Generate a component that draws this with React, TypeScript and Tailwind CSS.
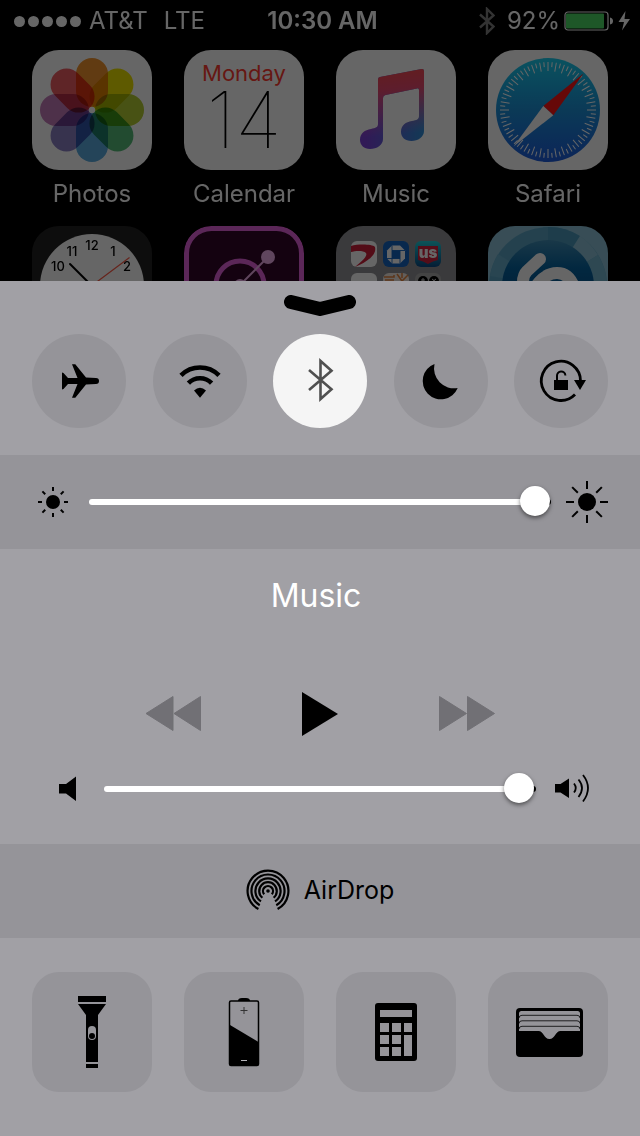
import React, { useState } from 'react';

const petals = ['#f2952e', '#ece000', '#b4cc32', '#55bc78', '#5aaade', '#8a80c4', '#c47cb8', '#ee5c62'];

const PhotosIcon = () => (
    <svg viewBox="0 0 120 120" className="w-full h-full bg-white">
        {petals.map((color, i) => (
            <rect
                key={color}
                x="44"
                y="8"
                width="32"
                height="49"
                rx="16"
                fill={color}
                transform={`rotate(${i * 45} 60 60)`}
                className="mix-blend-multiply"
            />
        ))}
        <circle cx="60" cy="60" r="3" fill="#fff" />
    </svg>
);

const CalendarIcon = () => (
    <div className="flex flex-col items-center w-full h-full pt-2 bg-white">
        <span className="text-[22px] leading-[30px] text-[#ff3b30]">Monday</span>
        <span className="text-[78px] leading-[64px] font-thin text-black">14</span>
    </div>
);

const MusicIcon = () => {
    const note =
        'M44 27L85.500 19Q88 18.600 88 21V81C88 87 82 91 75.500 91C69 91 65 87 65 82C65 75 70 72 76 71C81 70 83 69.500 83 66V40Q83 38 81 38.400L49.500 45Q47 45.500 47 48V89C47 95 41 99 34 99C28 99 24 95 24 90C24 83 29 80 35 79C40 78 42 77 42 74V29.500Q42 27.400 44 27Z';
    return (
        <svg viewBox="0 0 120 120" className="w-full h-full bg-white">
            <defs>
                <linearGradient id="note-base" gradientUnits="userSpaceOnUse" x1="30" y1="0" x2="88" y2="0">
                    <stop offset="0" stopColor="#7a42d8" />
                    <stop offset="1" stopColor="#2f8fd8" />
                </linearGradient>
                <linearGradient id="note-top" gradientUnits="userSpaceOnUse" x1="50" y1="25" x2="56" y2="85">
                    <stop offset="0" stopColor="#f44a58" />
                    <stop offset="0.250" stopColor="#e84a70" />
                    <stop offset="1" stopColor="#e84a90" stopOpacity="0" />
                </linearGradient>
            </defs>
            <path d={note} fill="url(#note-base)" />
            <path d={note} fill="url(#note-top)" />
        </svg>
    );
};

const SafariIcon = () => (
    <svg viewBox="0 0 120 120" className="w-full h-full bg-white">
        <defs>
            <linearGradient id="safari" x1="0" y1="0" x2="0" y2="1">
                <stop offset="0" stopColor="#19cdee" />
                <stop offset="0.500" stopColor="#1c90d8" />
                <stop offset="1" stopColor="#1e5cdc" />
            </linearGradient>
        </defs>
        <circle cx="60" cy="60" r="52" fill="url(#safari)" />
        {Array.from({ length: 72 }, (_, i) => (
            <line
                key={i}
                x1="60"
                x2="60"
                y1="12"
                y2={i % 2 ? 17 : 21}
                stroke="#fff"
                strokeWidth="1"
                transform={`rotate(${i * 5} 60 60)`}
            />
        ))}
        <path d="M95.500 23.500L55.300 56L65.300 65.300Z" fill="#ff1414" />
        <path d="M25.500 96.500L55.300 56L65.300 65.300Z" fill="#fff" />
    </svg>
);

const clockNumbers = [
    { n: '12', x: 60, y: 24 },
    { n: '11', x: 40, y: 30 },
    { n: '1', x: 81, y: 30 },
    { n: '10', x: 26, y: 45 },
    { n: '2', x: 95, y: 45 },
];

const ClockIcon = () => (
    <svg viewBox="0 0 120 120" className="w-full h-full bg-[#222]">
        <circle cx="60" cy="60" r="52" fill="#fff" />
        {clockNumbers.map(({ n, x, y }) => (
            <text key={n} x={x} y={y} textAnchor="middle" fontSize="13" fontWeight="500" fill="#000">
                {n}
            </text>
        ))}
        <path d="M38 38L60 60" stroke="#000" strokeWidth="2" strokeLinecap="round" />
        <path d="M97.500 31.500L58 61" stroke="#ff5a46" strokeWidth="1.200" />
    </svg>
);

const OrbitIcon = () => (
    <svg viewBox="0 0 120 120" className="w-full h-full bg-[#330628]">
        <rect x="2.500" y="2.500" width="115" height="115" rx="25" fill="none" stroke="#e462dc" strokeWidth="5" />
        <circle cx="56" cy="59" r="24" fill="none" stroke="#e462dc" strokeWidth="5" />
        <path d="M56 59L84 31" stroke="#efb0ea" strokeWidth="2" />
        <circle cx="84" cy="31" r="7" fill="#efb0ea" />
        <circle cx="56" cy="59" r="6" fill="#efb0ea" />
    </svg>
);

const FolderIcon = () => (
    <svg viewBox="0 0 120 120" className="w-full h-full bg-[#919196]">
        <defs>
            <linearGradient id="teal" x1="0" y1="0" x2="0" y2="1">
                <stop offset="0" stopColor="#1fd0dc" />
                <stop offset="1" stopColor="#0a4a86" />
            </linearGradient>
        </defs>
        <rect x="15" y="15" width="26" height="26" rx="6" fill="#fff" />
        <path d="M15 20C22 18 36 18 39 21C41 29 31 36 19 41C26 35 32 30 30 27C27 24 19 25 15 26Z" fill="#d0203a" />
        <rect x="47" y="15" width="26" height="26" rx="6" fill="#1464c0" />
        <path d="M56 19.500H64L69 24.500V32.500L64 37.500H56L51 32.500V24.500Z" fill="#fff" />
        <rect x="56" y="24.500" width="8" height="8" fill="#1464c0" />
        <path d="M56 19.500V24.500H69M64 37.500V24.500M51 32.500H64M56 24.500V37.500" fill="none" stroke="#1464c0" strokeWidth="0.900" />
        <rect x="79" y="15" width="26" height="26" rx="6" fill="url(#teal)" />
        <path d="M82 20H102V34Q97 35 92 38Q87 35 82 34Z" fill="#d4213c" />
        <text x="92" y="32" textAnchor="middle" fontSize="15" fontWeight="900" fill="#fff">
            us
        </text>
        <rect x="15" y="47" width="26" height="26" rx="6" fill="#fff" />
        <rect x="47" y="47" width="26" height="26" rx="6" fill="#f4ece4" />
        <path d="M48 51H58V49M49 54H58M61 48L66 55L72 49M66 47V52" fill="none" stroke="#e8843c" strokeWidth="1.500" />
        <rect x="79" y="47" width="26" height="26" rx="6" fill="#aaa" />
        <circle cx="87" cy="55" r="5" fill="#000" />
        <circle cx="98" cy="55" r="5" fill="#000" />
        <path d="M85 54H89M87 52V56M96 53L100 56M100 53L96 56" stroke="#ccc" />
    </svg>
);

const ShazamIcon = () => (
    <svg viewBox="0 0 120 120" className="w-full h-full bg-[#8cc0d6]">
        <defs>
            <linearGradient id="disc" x1="0" y1="0" x2="0" y2="1">
                <stop offset="0" stopColor="#3f8cb4" />
                <stop offset="0.300" stopColor="#0664a0" />
                <stop offset="1" stopColor="#043c78" />
            </linearGradient>
        </defs>
        <circle cx="60" cy="60" r="59" fill="#5aa4c4" />
        <path d="M60 60V1A59 59 0 0 1 92 10Z" fill="#4c9abc" />
        <path d="M60 60L92 10A59 59 0 0 1 110 29Z" fill="#8cc0d6" />
        <path d="M60 60L110 29A59 59 0 0 1 119 60Z" fill="#74b4ce" />
        <path d="M60 60L2 50A59 59 0 0 1 10 28Z" fill="#66acca" />
        <circle cx="60" cy="60" r="46" fill="url(#disc)" />
        <path d="M52 33L39 45Q33 51 36 64M44 66Q55 47 69 47Q81 47 86 61" fill="none" stroke="#fff" strokeWidth="12" strokeLinecap="round" />
    </svg>
);

const apps = [
    { name: 'Photos', Icon: PhotosIcon },
    { name: 'Calendar', Icon: CalendarIcon },
    { name: 'Music', Icon: MusicIcon },
    { name: 'Safari', Icon: SafariIcon },
    { name: '', Icon: ClockIcon },
    { name: '', Icon: OrbitIcon },
    { name: '', Icon: FolderIcon },
    { name: '', Icon: ShazamIcon },
];

const StatusBar = () => (
    <div className="grid grid-cols-[1fr_auto_1fr] items-center h-[42px] pl-[14px] pr-[9px] text-2xl">
        <div className="flex items-center">
            <div className="flex gap-[3px] mr-2">
                {[1, 2, 3, 4, 5].map(dot => (
                    <span key={dot} className="w-[11px] h-[11px] rounded-full bg-white" />
                ))}
            </div>
            <span className="mr-4">AT&amp;T</span>
            <span>LTE</span>
        </div>
        <span className="font-semibold">10:30 AM</span>
        <div className="flex items-center justify-end">
            <svg viewBox="0 0 16 28" className="w-4 h-7 mr-3">
                <path d="M1 7.500L14.500 19.500L8 26V2L14.500 8.500L1 20.500" fill="none" stroke="#808080" strokeWidth="2.400" />
            </svg>
            <span className="mr-1">92%</span>
            <svg viewBox="0 0 67 20" className="w-[67px] h-5">
                <rect x="1" y="1" width="43" height="18" rx="3" fill="none" stroke="#fff" strokeWidth="1.200" />
                <rect x="2" y="2.500" width="38" height="15" rx="1" fill="#4cd964" />
                <path d="M46 6.500Q49 7 49 10Q49 13 46 13.500Z" fill="#fff" />
                <path d="M61.500 0L54.500 11H60L58 19.500L66 8H60.500Z" fill="#fff" />
            </svg>
        </div>
    </div>
);

const HomeScreen = () => (
    <div className="h-[281px] overflow-hidden bg-black">
        <div className="text-white opacity-40">
            <StatusBar />
            <div className="grid grid-cols-4 gap-x-8 gap-y-2 px-8 pt-2">
                {apps.map(({ name, Icon }, i) => (
                    <div key={i} className="flex flex-col items-center">
                        <div className="w-[120px] h-[120px] overflow-hidden rounded-[27px]">
                            <Icon />
                        </div>
                        <span className="text-2xl leading-[48px]">{name}</span>
                    </div>
                ))}
            </div>
        </div>
    </div>
);

const toggles = [
    {
        name: 'Airplane Mode',
        icon: (
            <path d="M30 38.500L31.500 39L36 44H45.500L40 30.300H43.300L54 43.500L64 44a3 3 0 0 1 0 6L54 50.500L43.300 63.700H40L45.500 50H36L31.500 55L30 55.500Z" />
        ),
    },
    {
        name: 'Wi-Fi',
        icon: (
            <>
                <path
                    d="M28 41.300A27 27 0 0 1 66 41.300M35.400 49.200A16.200 16.200 0 0 1 58.600 49.200"
                    fill="none"
                    stroke="#000"
                    strokeWidth="4.600"
                />
                <path d="M41 56.500Q47 51 53 56.500L47 63.800Z" />
            </>
        ),
    },
    {
        name: 'Bluetooth',
        icon: (
            <path d="M36 36L58.500 55.300L47.500 65V27L58.500 36.700L36 56" fill="none" stroke="#505050" strokeWidth="2.600" />
        ),
    },
    {
        name: 'Do Not Disturb',
        icon: <path d="M40.500 30A18.200 18.200 0 1 0 63.700 54A20 20 0 0 1 40.500 30Z" />,
    },
    {
        name: 'Rotation Lock',
        icon: (
            <>
                <path d="M66.500 47A19.600 19.600 0 1 0 61 60.500" fill="none" stroke="#000" strokeWidth="2.800" />
                <path d="M60 46H72L66 56Z" />
                <rect x="40" y="46" width="14" height="10" />
                <path d="M43 46V42A4.200 4.200 0 0 1 51.400 41.500" fill="none" stroke="#000" strokeWidth="2" />
            </>
        ),
    },
];

const ToggleRow = () => {
    const [active, setActive] = useState<string[]>(['Bluetooth']);

    const toggle = (name: string) => {
        setActive(prev => (prev.includes(name) ? prev.filter(n => n !== name) : [...prev, name]));
    };

    return (
        <div className="flex justify-between px-8">
            {toggles.map(({ name, icon }) => (
                <button
                    key={name}
                    aria-label={name}
                    aria-pressed={active.includes(name)}
                    onClick={() => toggle(name)}
                    className={`w-[94px] h-[94px] rounded-full ${active.includes(name) ? 'bg-[#f5f5f5]' : 'bg-[#959499]'}`}
                >
                    <svg viewBox="0 0 94 94" className="w-full h-full">
                        {icon}
                    </svg>
                </button>
            ))}
        </div>
    );
};

const Slider = ({ label, initial }: { label: string; initial: number }) => {
    const [value, setValue] = useState(initial);

    return (
        <input
            type="range"
            aria-label={label}
            min={0}
            max={1000}
            value={value}
            onChange={e => setValue(Number(e.target.value))}
            style={{ '--fill': `${value / 10 - 2}%` } as React.CSSProperties}
            className="flex-1 min-w-0 h-8 appearance-none bg-transparent [&::-webkit-slider-runnable-track]:h-[6px] [&::-webkit-slider-runnable-track]:rounded-full [&::-webkit-slider-runnable-track]:bg-[linear-gradient(to_right,#fff_var(--fill),#000_var(--fill))] [&::-webkit-slider-thumb]:appearance-none [&::-webkit-slider-thumb]:w-[30px] [&::-webkit-slider-thumb]:h-[30px] [&::-webkit-slider-thumb]:-mt-[13px] [&::-webkit-slider-thumb]:rounded-full [&::-webkit-slider-thumb]:bg-white [&::-webkit-slider-thumb]:shadow-[0_2px_4px_rgba(0,0,0,0.5)]"
        />
    );
};

const SunIcon = ({ core, from, to, className }: { core: number; from: number; to: number; className: string }) => (
    <svg viewBox="-21 -21 42 42" className={className}>
        <circle r={core} />
        {[0, 45, 90, 135, 180, 225, 270, 315].map(angle => (
            <line key={angle} y1={from} y2={to} stroke="#000" strokeWidth="2" transform={`rotate(${angle})`} />
        ))}
    </svg>
);

const Transport = () => (
    <div className="flex items-center justify-center gap-[101px]">
        <button aria-label="Previous" className="text-[#717075]">
            <svg viewBox="0 0 56 36" className="w-14 h-9" fill="currentColor" stroke="currentColor" strokeLinejoin="round">
                <path d="M1 17.500L28 0.500V34.500ZM29 17.500L55.500 0.500V34.500Z" />
            </svg>
        </button>
        <button aria-label="Play">
            <svg viewBox="0 0 36 44" className="w-9 h-11">
                <path d="M0 0L36 22L0 44Z" />
            </svg>
        </button>
        <button aria-label="Next" className="text-[#717075]">
            <svg viewBox="0 0 56 36" className="w-14 h-9" fill="currentColor" stroke="currentColor" strokeLinejoin="round">
                <path d="M55.500 17.500L28.500 0.500V34.500ZM27.500 17.500L0.500 0.500V34.500Z" />
            </svg>
        </button>
    </div>
);

// r = ring radius, a = half of the opening at the bottom, in degrees
const rings = [
    { r: 20.4, a: 28 },
    { r: 16.5, a: 30 },
    { r: 12.6, a: 34 },
    { r: 8.8, a: 40 },
    { r: 5, a: 50 },
];

const AirDropIcon = () => (
    <svg viewBox="-22 -22 44 44" className="w-11 h-11">
        {rings.map(({ r, a }) => {
            const x = r * Math.sin((a * Math.PI) / 180);
            const y = r * Math.cos((a * Math.PI) / 180);
            return (
                <path key={r} d={`M${-x} ${y}A${r} ${r} 0 1 1 ${x} ${y}`} fill="none" stroke="#000" strokeWidth="2.200" />
            );
        })}
        <circle r="1.800" />
    </svg>
);

const shortcuts = [
    {
        name: 'Flashlight',
        icon: (
            <>
                <path d="M46 24H74V30H46ZM46 32H74L66 43V90H54V43ZM54 92H66V96H54Z" />
                <rect x="56" y="54" width="8" height="14" rx="4" fill="#959499" />
                <circle cx="60" cy="64" r="3" />
            </>
        ),
    },
    {
        name: 'Low Power Mode',
        icon: (
            <>
                <path d="M54 29Q54 26 58 26H62Q66 26 66 29Z" />
                <rect x="45.500" y="29" width="29" height="64.500" rx="1.500" fill="none" stroke="#000" strokeWidth="1.500" />
                <path d="M46 53L74 69.700V93H46Z" />
                <path d="M56.500 38.500H63.500M60 35V42" stroke="#333" />
                <path d="M57 88.500H63" stroke="#b5b4b9" />
            </>
        ),
    },
    {
        name: 'Calculator',
        icon: (
            <>
                <rect x="39" y="31" width="42" height="58" rx="3" />
                <path
                    d="M44 38H76V45H44ZM44 51H53V60H44ZM56 51H65V60H56ZM68 51H76V60H68ZM44 63H53V72H44ZM56 63H65V72H56ZM68 63H76V84H68ZM44 75H53V84H44ZM56 75H65V84H56Z"
                    fill="#959499"
                />
            </>
        ),
    },
    {
        name: 'Wallet',
        icon: (
            <>
                <rect x="28" y="36" width="67" height="49" rx="4" />
                <path
                    d="M31 59V41.500Q31 39 33.500 39H89.500Q92 39 92 41.500V59H72.500C67.500 59 67 67 61.500 67C56 67 55.500 59 50.500 59Z"
                    fill="#959499"
                />
                <path
                    d="M31 46Q31 43.300 34 43.300H89Q92 43.300 92 46M31 51.500Q31 48.800 34 48.800H89Q92 48.800 92 51.500M31 57Q31 54.300 34 54.300H89Q92 54.300 92 57"
                    fill="none"
                    stroke="#000"
                    strokeWidth="0.800"
                />
            </>
        ),
    },
];

const App: React.FC = () => {
    return (
        <div className="min-h-screen flex flex-col bg-[#a1a0a5] font-[Inter,'Liberation_Sans',sans-serif]">
            <HomeScreen />

            {/* Toggles */}
            <div className="pt-[14px] pb-[27px]">
                <svg viewBox="0 0 72 22" className="w-[72px] h-[22px] mx-auto mb-[17px]">
                    <path d="M7 7L36 14L65 7" fill="none" stroke="#000" strokeWidth="14" strokeLinecap="round" strokeLinejoin="round" />
                </svg>
                <ToggleRow />
            </div>

            {/* Brightness */}
            <div className="flex items-center h-[94px] px-8 bg-[#959499]">
                <SunIcon core={7} from={11} to={15} className="w-[42px] h-[42px] mr-[15px]" />
                <Slider label="Brightness" initial={997} />
                <SunIcon core={9} from={13} to={21} className="w-[42px] h-[42px] ml-[15px]" />
            </div>

            {/* Now playing */}
            <div className="flex flex-col h-[295px] pt-6">
                <h1 className="pr-2 text-[32px] leading-[46px] text-center text-white">Music</h1>
                <div className="mt-[73px]">
                    <Transport />
                </div>
                <div className="flex items-center h-[34px] mt-9 pl-[59px] pr-[50px]">
                    <svg viewBox="0 0 17 26" className="w-[17px] h-[26px] mr-7">
                        <path d="M0 8H7L17 0.500V25L7 17.500H0Z" />
                    </svg>
                    <Slider label="Volume" initial={995} />
                    <svg viewBox="0 0 35 30" className="w-[35px] h-[30px] ml-[19px]" fill="none" stroke="#000" strokeWidth="1.800">
                        <path d="M0 10H5.500L14 4.500V24L5.500 18.500H0Z" fill="#000" stroke="none" />
                        <path d="M19 9.500Q22.500 14 19 18.500M23.500 5.500Q30.500 14 23.500 23M28 1Q38 14 28 27.500" />
                    </svg>
                </div>
            </div>

            {/* AirDrop */}
            <button className="flex items-center justify-center gap-[14px] h-[94px] bg-[#959499] text-[25px]">
                <AirDropIcon />
                AirDrop
            </button>

            {/* Shortcuts */}
            <div className="grid grid-cols-4 gap-x-8 px-8 pt-[34px] pb-11">
                {shortcuts.map(({ name, icon }) => (
                    <button key={name} aria-label={name} className="justify-self-center w-[120px] h-[120px] rounded-[27px] bg-[#959499]">
                        <svg viewBox="0 0 120 120" className="w-full h-full">
                            {icon}
                        </svg>
                    </button>
                ))}
            </div>
        </div>
    );
};

export default App;
